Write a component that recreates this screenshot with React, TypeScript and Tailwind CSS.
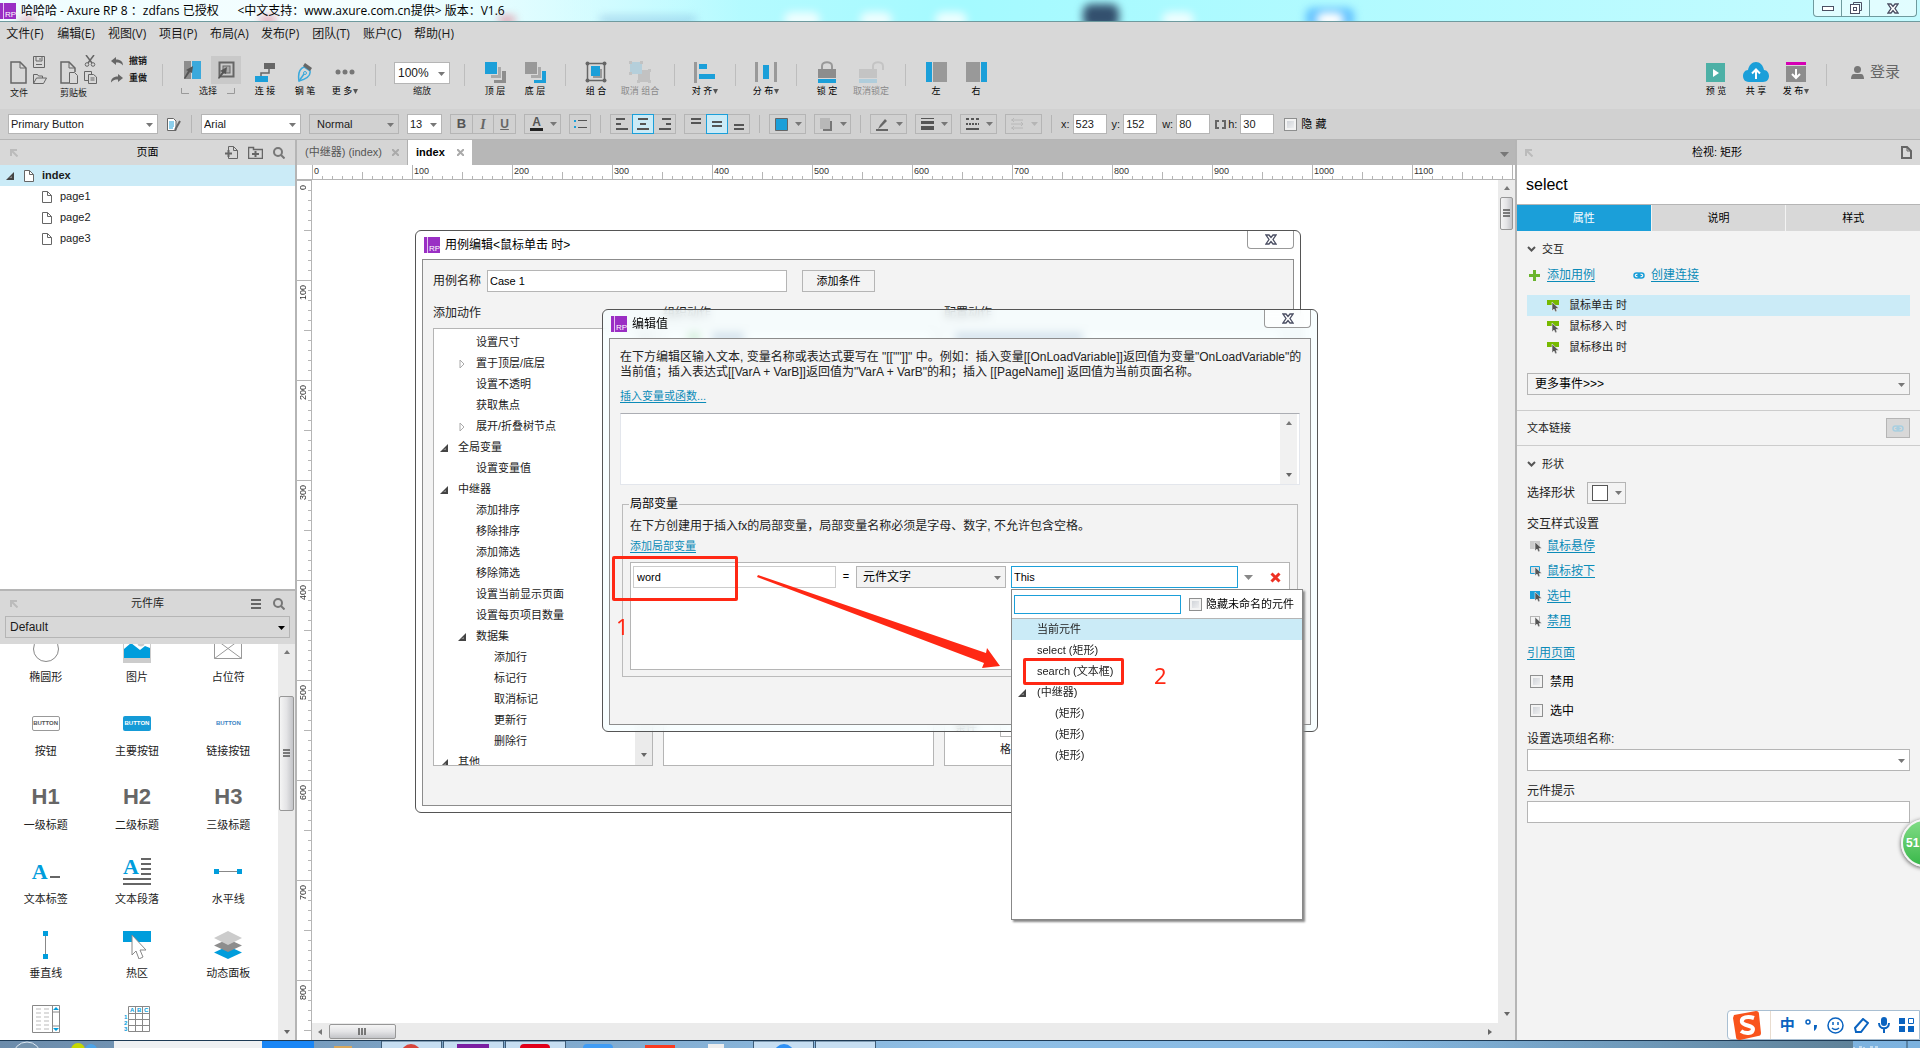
import type { ReactNode } from 'react'

const menus = ['文件(F)', '编辑(E)', '视图(V)', '项目(P)', '布局(A)', '发布(P)', '团队(T)', '账户(C)', '帮助(H)']

const actions = [
  { label: '设置尺寸', level: 2 },
  { label: '置于顶层/底层', level: 2, arrow: 'closed' },
  { label: '设置不透明', level: 2 },
  { label: '获取焦点', level: 2 },
  { label: '展开/折叠树节点', level: 2, arrow: 'closed' },
  { label: '全局变量', level: 1, arrow: 'open' },
  { label: '设置变量值', level: 2 },
  { label: '中继器', level: 1, arrow: 'open' },
  { label: '添加排序', level: 2 },
  { label: '移除排序', level: 2 },
  { label: '添加筛选', level: 2 },
  { label: '移除筛选', level: 2 },
  { label: '设置当前显示页面', level: 2 },
  { label: '设置每页项目数量', level: 2 },
  { label: '数据集', level: 2, arrow: 'open' },
  { label: '添加行', level: 3 },
  { label: '标记行', level: 3 },
  { label: '取消标记', level: 3 },
  { label: '更新行', level: 3 },
  { label: '删除行', level: 3 },
  { label: '其他', level: 1, arrow: 'open' },
]

const levelPadding: Record<number, string> = { 1: 'pl-1.5', 2: 'pl-6', 3: 'pl-[42px]' }

/* ---------- shared pieces ---------- */

function Svg({ w, h, children, className = '' }: { w: number; h: number; children: ReactNode; className?: string }) {
  return (
    <svg width={w} height={h} viewBox={`0 0 ${w} ${h}`} fill="none" className={`shrink-0 ${className}`} aria-hidden="true">
      {children}
    </svg>
  )
}

const Down = ({ color = '#777', className = '' }: { color?: string; className?: string }) => (
  <Svg w={7} h={4} className={className}><path d="M0 0h7L3.5 4z" fill={color} /></Svg>
)

const OpenArrow = () => <Svg w={8} h={8}><path d="M8 0v8H0z" fill="#444" /><path d="M6 4v2H3z" fill="#888" /></Svg>
const ClosedArrow = () => <Svg w={8} h={10}><path d="M2 1v8l4-4z" fill="#fff" stroke="#aaa" /></Svg>

function PageIcon() {
  return <Svg w={10} h={12}><path d="M.5.5h5l4 4v7h-9z" fill="#fff" stroke="#666" /><path d="M5.500.5v4h4" stroke="#666" /></Svg>
}

const PinIcon = () => (
  <Svg w={8} h={8}><path d="M1 7V1h6M1.500 1.500l6 6" stroke="#bbb" strokeWidth="2" /></Svg>
)

const SearchIcon = () => (
  <Svg w={12} h={12}><circle cx="5" cy="5" r="4" stroke="#777" strokeWidth="2" /><path d="M8 8l3.500 3.500" stroke="#777" strokeWidth="2" /></Svg>
)

function RpIcon() {
  return (
    <span className="relative flex h-4 w-4 shrink-0 items-end justify-end bg-[#9a2fc4] font-['Liberation_Sans'] text-[8px] leading-[9px] text-white">
      <span className="absolute inset-y-0 left-[3px] w-px bg-[#e4c3f0]" />
      RP
    </span>
  )
}

const CloseGlyph = () => (
  <Svg w={12} h={11}>
    <path d="M1 1h3l2 2.500L8 1h3L8 5.500l3 4.500H8L6 7.500 4 10H1l3-4.500z" fill="#fff" stroke="#4b4f63" strokeWidth="1.300" />
  </Svg>
)

function Select({ label, value, className = '', textClass = '', arrow = '#777' }: { label: string; value: string; className?: string; textClass?: string; arrow?: string }) {
  return (
    <span className={`relative flex border border-[#b5b5b5] ${className}`}>
      <select aria-label={label} className={`w-full min-w-0 appearance-none bg-transparent pr-3 outline-none ${textClass}`}>
        <option>{value}</option>
      </select>
      <Down color={arrow} className="pointer-events-none absolute top-1/2 right-1 -mt-px" />
    </span>
  )
}

function Check({ id }: { id: string }) {
  return (
    <input
      id={id}
      type="checkbox"
      className="h-[13px] w-[13px] shrink-0 appearance-none border border-[#8e8f8f] bg-linear-to-br from-[#c9cdd3] to-[#f6f6f6] shadow-[inset_0_0_0_2px_#f3f3f3]"
    />
  )
}

function Thumb({ horizontal = false, className = '' }: { horizontal?: boolean; className?: string }) {
  return (
    <div className={`flex items-center justify-center rounded-xs border border-[#979797] ${horizontal ? 'bg-linear-to-b' : 'bg-linear-to-r'} from-[#f5f5f5] via-[#e4e4e6] to-[#c3c4c8] ${className}`}>
      {horizontal
        ? <Svg w={9} h={7}><path d="M1 0v7M4 0v7M7 0v7" stroke="#555" strokeWidth="1.500" /></Svg>
        : <Svg w={7} h={9}><path d="M0 1h7M0 4h7M0 7h7" stroke="#555" strokeWidth="1.500" /></Svg>}
    </div>
  )
}

const UpTri = () => <Svg w={6} h={4}><path d="M0 4h6L3 0z" fill="#777" /></Svg>
const DownTri = () => <Svg w={6} h={4}><path d="M0 0h6L3 4z" fill="#666" /></Svg>

/* ---------- title + menu ---------- */

function TitleBar() {
  return (
    <header className="relative flex h-[22px] shrink-0 items-center overflow-hidden border-b border-[#6f9a9e] bg-linear-to-r from-[#e4fbff] via-[#a4faff] to-[#c4fbff] font-['Open_Sans','Noto_Sans_CJK_SC',sans-serif]">
      <div className="absolute inset-y-0 left-0 w-[740px] bg-linear-to-r from-[#effdff] via-[#f4feff] to-transparent" />
      <div className="absolute top-4 left-[600px] h-2 w-24 bg-[#7fb7dd]/50 blur-xs" />
      <div className="absolute top-4 left-[20px] h-2 w-4 bg-[#e08a9a]/60 blur-xs" />
      <div className="absolute top-4 left-[260px] h-2 w-4 bg-[#e08a9a]/80 blur-xs" />
      <div className="absolute top-4 left-[499px] h-2 w-4 bg-[#e08a9a]/80 blur-xs" />
      <div className="absolute top-1 left-[1083px] h-6 w-9 rounded-lg bg-[#33506e] blur-xs" />
      <div className="absolute top-3 left-[784px] h-4 w-9 rounded-full bg-white/80 blur-xs" />
      <div className="absolute top-3 left-[860px] h-4 w-8 rounded-full bg-white/80 blur-xs" />
      <div className="absolute top-3 left-[935px] h-4 w-8 rounded-full bg-white/80 blur-xs" />
      <div className="absolute top-3 left-[1162px] h-4 w-8 rounded-full bg-white/80 blur-xs" />
      <div className="absolute top-2 left-[1306px] h-5 w-12 rounded-md bg-[#5fc0ff] blur-xs" />
      <div className="absolute top-3 left-[1316px] h-4 w-7 rounded-full bg-white blur-xs" />
      <div className="relative flex items-center gap-[5px]">
        <RpIcon />
        <h1 className="text-[12px] leading-4 whitespace-pre text-black">哈哈哈 - Axure RP 8 ：zdfans 已授权      &lt;中文支持：www.axure.com.cn提供&gt; 版本：V1.6</h1>
      </div>
      <div className="absolute top-0 right-[3px] flex h-[17px] overflow-hidden rounded-b border border-t-0 border-[#6f9a9e] bg-white/50">
        <button aria-label="最小化" className="flex w-7 items-center justify-center border-r border-[#6f9a9e]"><Svg w={12} h={5}><rect x=".5" y=".5" width="11" height="4" fill="#fff" stroke="#4b4f63" /></Svg></button>
        <button aria-label="还原" className="flex w-7 items-center justify-center border-r border-[#6f9a9e]"><Svg w={12} h={12}><path d="M3.500 2.500v-2h8v8h-2" stroke="#4b4f63" /><rect x=".5" y="2.500" width="9" height="9" fill="#fff" stroke="#4b4f63" /><rect x="3.500" y="5.500" width="3" height="3" stroke="#4b4f63" /></Svg></button>
        <button aria-label="关闭" className="flex w-[46px] items-center justify-center"><CloseGlyph /></button>
      </div>
    </header>
  )
}

function MenuBar() {
  return (
    <nav className="flex h-6 shrink-0 items-center gap-[13px] pl-1.5 font-['Open_Sans','Noto_Sans_CJK_SC',sans-serif] text-[12px] text-[#1a1a1a]">
      {menus.map(m => <button key={m} className="w-[38px] whitespace-nowrap">{m}</button>)}
    </nav>
  )
}

/* ---------- main toolbar ---------- */

function Tool({ label, icon, wide = false, disabled = false, more = false }: { label: string; icon: ReactNode; wide?: boolean; disabled?: boolean; more?: boolean }) {
  return (
    <button disabled={disabled} className={`flex shrink-0 flex-col items-center ${wide ? 'w-12' : 'w-10'} ${disabled ? 'text-[#8a8a8a]' : 'text-black'}`}>
      <span className="flex h-7 items-center pt-1">{icon}</span>
      <span className="flex items-center gap-px text-[9px] leading-[14px] whitespace-nowrap">
        {label}
        {more && <Svg w={5} h={5}><path d="M0 0h5L2.500 5z" fill="#555" /></Svg>}
      </span>
    </button>
  )
}

const Sep = () => <span className="mx-2.5 mt-2 h-[22px] w-px shrink-0 bg-[#bdbdbd]" />

function Toolbar() {
  return (
    <div className="flex h-[63px] shrink-0 items-start pt-2.5">
      <div className="flex w-11 shrink-0 flex-col pl-2.5">
        <div className="flex h-7 items-end gap-[6px]">
          <Svg w={17} h={23}><path d="M1 1h9l6 6v15H1z" stroke="#666" strokeWidth="1.500" /><path d="M10 1v6h6" stroke="#666" /></Svg>
          <div className="flex flex-col gap-1.5">
            <Svg w={12} h={12}><path d="M.5.5h11v11H.5z" stroke="#666" /><path d="M3 1v4h6V1M3 8.500h6M7 2v2" stroke="#666" /></Svg>
            <Svg w={14} h={10}><path d="M.5 9.500v-9h4l1 1.500h4v2M.5 9.500l3-5.500h10l-3 5.500z" stroke="#666" /></Svg>
          </div>
        </div>
        <span className="text-[9px] leading-[18px]">文件</span>
      </div>
      <div className="flex w-14 shrink-0 flex-col pl-4">
        <div className="flex h-7 items-end gap-[6px]">
          <Svg w={18} h={23}><path d="M9 22H1V1h8l6 6v4" stroke="#666" strokeWidth="1.500" /><path d="M9 1v6h6" stroke="#666" /><path d="M9.500 11.500h5l3 3v8h-8z" fill="#d8d8d8" stroke="#666" /></Svg>
          <div className="flex flex-col gap-1">
            <Svg w={12} h={12}><path d="M2 0l6 8M10 0L4 8" stroke="#666" strokeWidth="1.500" /><circle cx="3" cy="9.500" r="1.800" stroke="#666" /><circle cx="9" cy="9.500" r="1.800" stroke="#666" /></Svg>
            <Svg w={13} h={13}><path d="M4 9.500H.5v-9h7V3" stroke="#666" /><path d="M4.500 3.500h5l3 2.500v6.500h-8zM6.500 7h4M6.500 9h4" stroke="#666" /></Svg>
          </div>
        </div>
        <span className="text-[9px] leading-[18px]">剪贴板</span>
      </div>
      <div className="-mt-0.5 flex w-[52px] shrink-0 flex-col gap-[3px] pl-[11px] text-[9px] leading-[14px] font-bold whitespace-nowrap">
        <button className="flex items-center gap-1.5"><Svg w={12} h={9}><path d="M5 0v2.500c5 0 7 2.500 7 6C10 6 8 5.500 5 5.500V8L0 4z" fill="#666" /></Svg>撤销</button>
        <button className="flex items-center gap-1.5"><Svg w={12} h={9}><path d="M7 0v2.500C2 2.500 0 5 0 8.500 2 6 4 5.500 7 5.500V8l5-4z" fill="#666" /></Svg>重做</button>
      </div>
      <Sep />
      <div className="flex w-[72px] shrink-0 flex-col pl-2">
        <div className="flex">
          <button aria-label="相交选中" className="flex h-7 w-[30px] items-center pl-[3px]">
            <Svg w={17} h={20}><path d="M0 1h7v18H0z" fill="#8d8d8d" /><path d="M8 1h9v18H8z" fill="#3ba9dc" /><path d="M9 6L8 13 6 12l-5 7-1-1 4-7-2-1z" fill="#555" /></Svg>
          </button>
          <button aria-label="包含选中" className="flex h-7 w-[30px] items-center justify-center bg-[#c9c9c9]">
            <Svg w={18} h={20}><rect x="2.500" y="2.500" width="14" height="14" stroke="#666" strokeWidth="2" /><rect x="6" y="6" width="7" height="7" fill="#aaa" stroke="#666" /><path d="M10 7L9 14 7 13l-5 6-1-1 4-6-2-1z" fill="#555" /></Svg>
          </button>
        </div>
        <div className="flex items-center gap-2.5 text-[9px] leading-[14px]">
          <Svg w={8} h={6}><path d="M.5 0v5.500H8" stroke="#999" /></Svg>选择<Svg w={8} h={6}><path d="M7.500 0v5.500H0" stroke="#999" /></Svg>
        </div>
      </div>
      <Tool label="连 接" icon={<Svg w={20} h={20}><path d="M9 1h11v6H9z" fill="#666" /><path d="M0 14h13v6H0z" fill="#1b9fd9" /><path d="M14 7v4H6v3" stroke="#666" strokeWidth="1.500" /></Svg>} />
      <Tool label="钢 笔" icon={<Svg w={16} h={20}><path d="M7 5l6 4c1 5-4 8-11 10C1 13 2 7 7 5z" stroke="#3ba9dc" strokeWidth="1.500" /><path d="M2 19l5-7" stroke="#3ba9dc" strokeWidth="1.500" /><circle cx="8" cy="11" r="1.500" stroke="#3ba9dc" /><path d="M8 1l7 5-2 3-7-5z" fill="#666" /></Svg>} />
      <Tool label="更 多" more icon={<Svg w={20} h={6}><circle cx="3" cy="3" r="2.500" fill="#777" /><circle cx="10" cy="3" r="2.500" fill="#777" /><circle cx="17" cy="3" r="2.500" fill="#777" /></Svg>} />
      <Sep />
      <div className="flex w-[68px] shrink-0 flex-col items-center pt-1.5 pl-1">
        <Select label="缩放" value="100%" className="h-[22px] w-14 bg-white" textClass="pl-[3px] text-[12px]" />
        <span className="text-[9px] leading-[14px]">缩放</span>
      </div>
      <Sep />
      <Tool label="顶 层" icon={<Svg w={21} h={21}><path d="M17 9h4v12h-12v-3h8z" fill="#8d8d8d" /><path d="M13 5h3v11H6v-3h7z" fill="#aaa" /><path d="M0 0h12v12H0z" fill="#1b9fd9" /></Svg>} />
      <Tool label="底 层" icon={<Svg w={21} h={21}><path d="M17 9h4v12H9v-3h8z" fill="#1b9fd9" /><path d="M13 5h3v11H6v-3h7z" fill="#aaa" /><path d="M0 0h12v12H0z" fill="#999" /></Svg>} />
      <Sep />
      <Tool label="组 合" icon={<Svg w={22} h={22}><rect x="2.500" y="2.500" width="17" height="17" stroke="#666" strokeWidth="1.500" /><path d="M8 8h9v9H8z" fill="#999" /><path d="M6 5h9v10H6z" fill="#1b9fd9" /><g fill="#666"><circle cx="2.500" cy="2.500" r="2" /><circle cx="19.500" cy="2.500" r="2" /><circle cx="2.500" cy="19.500" r="2" /><circle cx="19.500" cy="19.500" r="2" /></g></Svg>} />
      <Tool label="取消 组合" wide disabled icon={<Svg w={22} h={22}><path d="M9 9h12v12H9z" fill="#c2c2c2" /><path d="M1 1h12v12H1z" fill="#b5cfdb" /><g fill="#c2c2c2"><path d="M0 0h3v3H0zM11 0h3v3h-3zM0 11h3v3H0zM19 8h3v3h-3zM8 19h3v3H8zM19 19h3v3h-3z" /></g></Svg>} />
      <Sep />
      <Tool label="对 齐" more icon={<Svg w={22} h={21}><path d="M0 0h3v21H0z" fill="#999" /><path d="M5 2h8v5H5zM5 12h16v5H5z" fill="#1b9fd9" /></Svg>} />
      <Sep />
      <Tool label="分 布" more icon={<Svg w={22} h={20}><path d="M0 0h3v20H0zM19 0h3v20h-3z" fill="#999" /><path d="M8 3h6v14H8z" fill="#1b9fd9" /></Svg>} />
      <Sep />
      <Tool label="锁 定" icon={<Svg w={18} h={22}><path d="M4 9V5c0-5 10-5 10 0v4" stroke="#999" strokeWidth="2" /><path d="M0 8h18v9H0z" fill="#8d8d8d" /><path d="M0 18h18v4H0z" fill="#1b9fd9" /></Svg>} />
      <Tool label="取消锁定" wide disabled icon={<Svg w={25} h={22}><path d="M14 9V5c0-5 10-5 10 0v4" stroke="#c4c4c4" strokeWidth="2" /><path d="M0 8h18v9H0z" fill="#c4c4c4" /><path d="M0 18h18v4H0z" fill="#b0cddb" /></Svg>} />
      <Sep />
      <Tool label="左" icon={<Svg w={21} h={20}><path d="M0 0h6v20H0z" fill="#1b9fd9" /><path d="M7 0h14v20H7z" fill="#999" /></Svg>} />
      <Tool label="右" icon={<Svg w={21} h={20}><path d="M0 0h14v20H0z" fill="#999" /><path d="M15 0h6v20h-6z" fill="#1b9fd9" /></Svg>} />
      <div className="ml-auto flex shrink-0 items-start pr-5">
        <Tool label="预 览" icon={<Svg w={19} h={19}><path d="M0 0h19v19H0z" fill="#4db0a6" /><path d="M7 6l6 4-6 4z" fill="#fff" /></Svg>} />
        <Tool label="共 享" icon={<Svg w={26} h={20}><path d="M6 20C1 20 0 16 0 14c0-3 2-6 5-6 1-5 4-8 8-8s7 3 8 8c3 0 5 3 5 6s-2 6-6 6z" fill="#1b9fd9" /><path d="M13 17V8M9 11.500L13 7.500l4 4" stroke="#fff" strokeWidth="2" /></Svg>} />
        <Tool label="发 布" more icon={<Svg w={20} h={20}><path d="M0 0h20v3H0z" fill="#d500b4" /><path d="M0 4h20v16H0z" fill="#8d8d8d" /><path d="M10 7v9M6 12l4 4 4-4" stroke="#fff" strokeWidth="2" /></Svg>} />
        <Sep />
        <button className="flex items-center gap-1.5 pt-1 pl-3.5 text-[15px] leading-6 text-[#666]">
          <Svg w={13} h={13}><circle cx="6.500" cy="3.500" r="3.500" fill="#777" /><path d="M0 13c0-3 1-5 3-5h7c2 0 3 2 3 5z" fill="#777" /></Svg>
          登录
        </button>
      </div>
    </div>
  )
}

/* ---------- format bar ---------- */

const Split = () => <span className="mx-px h-[18px] w-px shrink-0 bg-[#b5b5b5]" />

function DropBtn({ label, children, disabled = false }: { label: string; children: ReactNode; disabled?: boolean }) {
  return (
    <button aria-label={label} disabled={disabled} className="flex h-5 w-[37px] shrink-0 items-center justify-between border border-[#b5b5b5] px-[3px] pl-[5px]">
      {children}
      <Down color={disabled ? '#b5b5b5' : '#777'} />
    </button>
  )
}

function Segment({ items }: { items: { label: string; icon: ReactNode; active?: boolean }[] }) {
  return (
    <div className="flex shrink-0">
      {items.map((it, i) => (
        <button key={it.label} aria-label={it.label} className={`flex h-5 w-[22px] items-center justify-center border ${it.active ? 'border-[#1b9fd9] bg-[#cbebf7]' : i === 0 ? 'border-r-0 border-[#b5b5b5]' : i === 1 ? 'border-[#b5b5b5]' : 'border-l-0 border-[#b5b5b5]'}`}>
          {it.icon}
        </button>
      ))}
    </div>
  )
}

const Lines = ({ d }: { d: string }) => <Svg w={12} h={12}><path d={d} stroke="#555" strokeWidth="2" /></Svg>

function Coord({ name, value }: { name: string; value: string }) {
  return (
    <label className="flex items-center gap-[3px]">
      {name}:
      <input defaultValue={value} className="h-5 w-[34px] border border-[#b5b5b5] bg-white pl-[2px] outline-none" />
    </label>
  )
}

function FormatBar() {
  return (
    <div className="flex h-[31px] shrink-0 items-center gap-2 border-b border-[#b5b5b5] bg-[#d1d1d1] pl-2 text-[11px]">
      <Select label="样式" value="Primary Button" className="h-5 w-[150px] shrink-0 bg-white" textClass="pl-[2px]" />
      <button aria-label="管理样式" className="w-4 pl-px">
        <Svg w={14} h={13}><path d="M.5.5h6l2.500 2.500v9.500H.5z" fill="#fff" stroke="#666" /><path d="M2 4h5M2 6h5M2 8h5M2 10h4" stroke="#1b9fd9" /><path d="M13 3L8 12" stroke="#666" strokeWidth="2" /></Svg>
      </button>
      <Split />
      <Select label="字体" value="Arial" className="h-5 w-[100px] shrink-0 bg-white" textClass="pl-[2px]" />
      <Select label="字形" value="Normal" className="h-5 w-[90px] shrink-0" textClass="pl-[7px]" />
      <Select label="字号" value="13" className="h-5 w-[35px] shrink-0 bg-white" textClass="pl-[2px]" />
      <Segment items={[
        { label: '粗体', icon: <b className="text-[13px] text-[#555]">B</b> },
        { label: '斜体', icon: <i className="font-['Liberation_Serif'] text-[14px] font-bold text-[#666]">I</i> },
        { label: '下划线', icon: <u className="text-[12px] font-bold text-[#666]">U</u> },
      ]} />
      <DropBtn label="文字颜色"><span className="flex w-[13px] flex-col items-center text-[12px] leading-[11px] font-bold text-[#555]">A<span className="h-[3px] w-[13px] bg-[#222]" /></span></DropBtn>
      <button aria-label="项目符号" className="flex h-5 w-[22px] shrink-0 items-center justify-center border border-[#b5b5b5]">
        <Svg w={13} h={10}><path d="M4 1.500h9M4 8.500h9" stroke="#555" /><path d="M0 1h2v2H0zM0 7h2v2H0z" fill="#1b9fd9" /></Svg>
      </button>
      <Split />
      <Segment items={[
        { label: '左对齐', icon: <Lines d="M0 1h9M0 6h5M0 11h12" /> },
        { label: '居中', icon: <Lines d="M1 1h10M3 6h6M0 11h12" />, active: true },
        { label: '右对齐', icon: <Lines d="M3 1h9M7 6h5M0 11h12" /> },
      ]} />
      <Segment items={[
        { label: '顶部对齐', icon: <Lines d="M1 1h10M1 5h10" /> },
        { label: '垂直居中', icon: <Lines d="M1 4h10M1 8h10" />, active: true },
        { label: '底部对齐', icon: <Lines d="M1 7h10M1 11h10" /> },
      ]} />
      <Split />
      <DropBtn label="填充颜色"><Svg w={13} h={13}><path d="M.5.5h12v12H.5z" fill="#1b9fd9" stroke="#666" /></Svg></DropBtn>
      <DropBtn label="外部阴影"><Svg w={13} h={13}><path d="M3 3h9v10H3z" fill="#777" /><path d="M0 0h10v11H0z" fill="#b8b8b8" /></Svg></DropBtn>
      <Split />
      <DropBtn label="线段颜色"><Svg w={13} h={13}><path d="M2 11l2-4 5-6 2 2-6 6z" fill="#666" /><path d="M0 12h12" stroke="#666" strokeWidth="2" /></Svg></DropBtn>
      <DropBtn label="线宽"><Svg w={13} h={12}><path d="M0 .5h13" stroke="#555" /><path d="M0 4.500h13" stroke="#555" strokeWidth="3" /><path d="M0 10h13" stroke="#555" strokeWidth="4" /></Svg></DropBtn>
      <DropBtn label="线段类型"><Svg w={13} h={12}><path d="M0 1h13" stroke="#555" strokeWidth="2" strokeDasharray="3 2" /><path d="M0 6h13" stroke="#555" strokeWidth="2" strokeDasharray="2 1" /><path d="M0 11h13" stroke="#555" strokeWidth="2" /></Svg></DropBtn>
      <DropBtn label="箭头" disabled><Svg w={13} h={12}><path d="M0 2h12M0 6h12M0 10h12M3 0L1 2l2 2M10 4l2 2-2 2M3 8l-2 2 2 2" stroke="#b8b8b8" /></Svg></DropBtn>
      <Split />
      <div className="flex items-center gap-[5px]">
        <Coord name="x" value="523" />
        <Coord name="y" value="152" />
        <Coord name="w" value="80" />
        <div className="flex items-center gap-0.5">
          <Svg w={11} h={9}><path d="M4 1H1v7h3M7 1h3v7H7" stroke="#666" strokeWidth="2" /></Svg>
          <Coord name="h" value="30" />
        </div>
      </div>
      <div className="flex items-center gap-1 pl-0.5">
        <Check id="hidden" />
        <label htmlFor="hidden" className="text-black">隐 藏</label>
      </div>
    </div>
  )
}

/* ---------- left column ---------- */

const Blue = '#009ddc'

function Glyph({ text }: { text: string }) {
  return <span className="text-[22px] leading-7 font-bold text-[#666]">{text}</span>
}

const widgets: { label?: string; icon: ReactNode }[] = [
  { label: '椭圆形', icon: <Svg w={28} h={28}><circle cx="14" cy="14" r="12.500" stroke="#888" /></Svg> },
  { label: '图片', icon: <Svg w={28} h={28}><path d="M0 0h28v28H0z" fill="#ccc" /><path d="M1 1h26v17H1z" fill="#fff" /><circle cx="18" cy="8" r="3.500" fill="#ccc" /><path d="M1 14l7-6 9 7 5-4 5 2v10H1z" fill={Blue} /></Svg> },
  { label: '占位符', icon: <Svg w={28} h={28}><path d="M.5 3.500h27v20H.5zM.5 3.500l27 20M27.500 3.500l-27 20" stroke="#999" /></Svg> },
  { label: '按钮', icon: <span className="flex h-[15px] w-7 items-center justify-center rounded-xs border border-[#999] text-[6px] font-bold text-[#555]">BUTTON</span> },
  { label: '主要按钮', icon: <span className="flex h-[15px] w-7 items-center justify-center rounded-xs bg-[#159bd7] text-[6px] font-bold text-white">BUTTON</span> },
  { label: '链接按钮', icon: <span className="text-[6px] font-bold text-[#3b84c4]">BUTTON</span> },
  { label: '一级标题', icon: <Glyph text="H1" /> },
  { label: '二级标题', icon: <Glyph text="H2" /> },
  { label: '三级标题', icon: <Glyph text="H3" /> },
  { label: '文本标签', icon: <span className="flex items-end pt-0.5 font-['Liberation_Serif'] text-[22px] leading-[22px] font-bold text-[#009ddc]">A<Svg w={12} h={8}><path d="M2 2h10" stroke="#666" strokeWidth="2" /></Svg></span> },
  { label: '文本段落', icon: <span className="relative flex h-7 w-7 font-['Liberation_Serif'] text-[22px] leading-5 font-bold text-[#009ddc]">A<Svg w={28} h={28} className="absolute inset-0"><path d="M18 2h10M18 7h10M18 12h10M18 17h10M0 22h28M0 27h28" stroke="#666" strokeWidth="2" /></Svg></span> },
  { label: '水平线', icon: <Svg w={28} h={28}><path d="M3 14.500h22" stroke="#888" /><path d="M0 12h5v5H0zM23 12h5v5h-5z" fill={Blue} /></Svg> },
  { label: '垂直线', icon: <Svg w={28} h={28}><path d="M13.500 3v22" stroke="#888" /><path d="M11 0h5v5h-5zM11 23h5v5h-5z" fill={Blue} /></Svg> },
  { label: '热区', icon: <Svg w={28} h={28}><path d="M0 0h28v11H0z" fill={Blue} /><path d="M9 4v20l4-4 3 8 4-2-3-7h6z" fill="#fff" stroke="#888" /></Svg> },
  { label: '动态面板', icon: <Svg w={28} h={28}><path d="M14 15l14 6.500L14 28 0 21.500z" fill={Blue} /><path d="M14 8l14 6.500L14 21 0 14.500z" fill="#8d8d8d" /><path d="M14 0l14 7-14 7L0 7z" fill="#ccc" /></Svg> },
  { icon: <Svg w={28} h={28}><path d="M.5.5h27v27H.5zM20.500.5v27M20.500 7h7M20.500 21h7" stroke="#888" /><path d="M4 4h5M12 4h5M4 8h5M12 8h5M4 12h5M12 12h5M4 16h5M12 16h5M4 20h5M12 20h5M4 24h5M12 24h5" stroke="#bbb" /><path d="M24 2l3 3h-6zM24 26l3-3h-6z" fill={Blue} /></Svg> },
  {
    icon: (
      <Svg w={28} h={28}>
        <path d="M5.500 1.500h21v25h-21zM5.500 8.500h21M5.500 14.500h21M5.500 20.500h21M12.500 1.500v25M19.500 1.500v25" stroke="#888" />
        <g fill={Blue} fontSize="6" fontWeight="bold"><text x="7" y="7">A</text><text x="14" y="7">B</text><text x="21" y="7">C</text><text x="1" y="14">1</text><text x="1" y="20">2</text><text x="1" y="26">3</text></g>
      </Svg>
    ),
  },
]

function LeftColumn() {
  return (
    <aside className="flex w-[297px] shrink-0 flex-col border-r-2 border-[#b5b5b5]">
      <section className="flex min-h-0 flex-1 flex-col bg-white">
        <div className="flex h-[25px] shrink-0 items-center bg-[#d8d8d8] px-2.5">
          <div className="w-16"><PinIcon /></div>
          <h2 className="flex-1 text-center text-[11px] text-black">页面</h2>
          <div className="flex w-16 items-center justify-end gap-2.5">
            <button aria-label="添加页面"><Svg w={13} h={13}><path d="M3.500 4V.5h5l4 4v8h-9V11" stroke="#666" /><path d="M8.500.5v4h4" stroke="#666" /><path d="M0 7.500h7M3.500 4v7" stroke="#666" strokeWidth="2" /></Svg></button>
            <button aria-label="添加文件夹"><Svg w={15} h={13}><path d="M.5 1.500h5v2h9v9H.5z" stroke="#666" strokeWidth="1.500" /><path d="M4 8h7M7.500 5v6" stroke="#666" strokeWidth="2" /></Svg></button>
            <button aria-label="搜索页面"><SearchIcon /></button>
          </div>
        </div>
        <ul className="text-[11px] text-[#1a1a1a]">
          <li className="flex h-[21px] items-center bg-[#cbebf7] pl-1.5 font-bold">
            <OpenArrow /><span className="w-2.5" /><PageIcon /><span className="pl-2">index</span>
          </li>
          {['page1', 'page2', 'page3'].map(p => (
            <li key={p} className="flex h-[21px] items-center gap-2 pl-[42px]"><PageIcon />{p}</li>
          ))}
        </ul>
      </section>
      <section className="flex h-[451px] shrink-0 flex-col border-t-2 border-[#b5b5b5] bg-white">
        <div className="shrink-0 bg-[#d8d8d8] pb-1.5">
          <div className="flex h-[25px] items-center px-2.5">
            <div className="w-16"><PinIcon /></div>
            <h2 className="flex-1 text-center text-[11px] text-[#222]">元件库</h2>
            <div className="flex w-16 items-center justify-end gap-3">
              <button aria-label="选项"><Svg w={10} h={10}><path d="M0 1h10M0 5h10M0 9h10" stroke="#666" strokeWidth="2" /></Svg></button>
              <button aria-label="搜索元件"><SearchIcon /></button>
            </div>
          </div>
          <Select label="元件库" value="Default" className="mx-[5px] h-[22px]" textClass="pl-1 text-[12px]" arrow="#000" />
        </div>
        <div className="flex min-h-0 flex-1">
          <div className="min-w-0 flex-1 overflow-hidden pr-1">
            <div className="-mt-[9px] grid grid-cols-3">
              {widgets.map((w, i) => (
                <div key={i} className="flex h-[74px] flex-col items-center text-[#222]">
                  <span className="flex h-7 items-center">{w.icon}</span>
                  {w.label && <span className="pt-1.5 text-[11px] leading-4">{w.label}</span>}
                </div>
              ))}
            </div>
          </div>
          <div className="flex w-[17px] flex-col items-center bg-[#ebebeb] py-1.5">
            <UpTri />
            <Thumb className="mt-[42px] h-[115px] w-[15px]" />
            <span className="mt-auto"><DownTri /></span>
          </div>
        </div>
      </section>
    </aside>
  )
}

/* ---------- canvas ---------- */

const rulerX = 'M10.500 11v4M20.500 11v4M30.500 11v4M40.500 11v4M50.500 7v8M60.500 11v4M70.500 11v4M80.500 11v4M90.500 11v4'
const rulerY = 'M11 10.500h4M11 20.500h4M11 30.500h4M11 40.500h4M7 50.500h8M11 60.500h4M11 70.500h4M11 80.500h4M11 90.500h4'

function Canvas() {
  return (
    <main className="flex min-w-0 flex-1 flex-col bg-white">
      <div className="flex h-[25px] shrink-0 bg-[#b7b7b7] text-[11px]">
        <button className="flex items-center gap-2.5 border-r border-[#b0b0b0] bg-[#d5d5d5] px-2 text-[#555]">
          (中继器) (index)
          <Svg w={7} h={7}><path d="M0 0l7 7M7 0L0 7" stroke="#aaa" strokeWidth="2" /></Svg>
        </button>
        <button className="flex items-center gap-3 bg-white px-2 font-bold text-black">
          index
          <Svg w={7} h={7}><path d="M0 0l7 7M7 0L0 7" stroke="#aaa" strokeWidth="2" /></Svg>
        </button>
        <span className="ml-auto flex items-center pt-1 pr-1.5"><Svg w={9} h={5}><path d="M0 0h9L4.500 5z" fill="#777" /></Svg></span>
      </div>
      <div className="flex h-[15px] shrink-0 overflow-hidden border-b border-[#b5b5b5]">
        <span className="w-[15px] shrink-0" />
        {Array.from({ length: 13 }, (_, i) => (
          <div key={i} className="relative w-[100px] shrink-0 border-l border-[#b5b5b5] pl-px text-[9px] leading-[12px] text-[#333]">
            {i < 12 && i * 100}
            <Svg w={100} h={15} className="absolute top-0 -left-px"><path d={rulerX} stroke="#b5b5b5" /></Svg>
          </div>
        ))}
      </div>
      <div className="flex min-h-0 flex-1">
        <div className="flex w-[15px] shrink-0 flex-col overflow-hidden border-r border-[#b5b5b5]">
          {Array.from({ length: 9 }, (_, i) => (
            <div key={i} className="relative flex h-[100px] shrink-0 border-t border-[#b5b5b5] pt-1">
              <span className="h-fit rotate-180 text-[9px] leading-3 text-[#333] [writing-mode:vertical-rl]">{i * 100}</span>
              <Svg w={15} h={100} className="absolute -top-px left-0"><path d={rulerY} stroke="#b5b5b5" /></Svg>
            </div>
          ))}
        </div>
        <div className="flex min-w-0 flex-1 flex-col">
          <div className="flex-1" />
          <div className="flex h-[17px] shrink-0 items-center bg-[#ebebeb] pr-1.5 pl-1.5">
            <Svg w={4} h={6}><path d="M4 0v6L0 3z" fill="#777" /></Svg>
            <Thumb horizontal className="ml-[7px] h-[15px] w-[67px]" />
            <Svg w={4} h={6} className="ml-auto"><path d="M0 0v6l4-3z" fill="#666" /></Svg>
          </div>
        </div>
        <div className="flex w-[17px] shrink-0 flex-col items-center bg-[#ebebeb] pt-1.5 pb-6">
          <UpTri />
          <Thumb className="mt-[7px] h-[33px] w-[13px]" />
          <span className="mt-auto"><DownTri /></span>
        </div>
      </div>
    </main>
  )
}

/* ---------- inspector ---------- */

const A = ({ children, className = '' }: { children: ReactNode; className?: string }) => (
  <a href="#" className={`text-[#0b8bb8] underline underline-offset-2 ${className}`}>{children}</a>
)

const Cursor = ({ children }: { children?: ReactNode }) => (
  <Svg w={12} h={12}>{children}<path d="M5 2v9l2-2 1.500 3L10 11 9 8.500h3z" fill="#555" stroke="#f3f3f3" strokeWidth=".6" /></Svg>
)

const Chain = ({ color }: { color: string }) => (
  <Svg w={12} h={7}>
    <rect x="1" y="1" width="6" height="5" rx="2.500" stroke={color} strokeWidth="1.500" />
    <rect x="5" y="1" width="6" height="5" rx="2.500" stroke={color} strokeWidth="1.500" />
    <path d="M3 3.500h6" stroke={color} />
  </Svg>
)

const Chevron = () => <Svg w={9} h={6}><path d="M1 1l3.500 3.500L8 1" stroke="#555" strokeWidth="2" /></Svg>

const states: { label: string; icon: ReactNode }[] = [
  { label: '鼠标悬停', icon: <path d="M0 1h10v8H0z" fill="#ccc" /> },
  { label: '鼠标按下', icon: <path d="M.5 1.500h9v7h-9z" fill="#ddd" stroke="#1b9fd9" /> },
  { label: '选中', icon: <path d="M0 1h10v8H0z" fill="#1b9fd9" /> },
  { label: '禁用', icon: <path d="M.5 1.500h9v7h-9z" stroke="#777" strokeDasharray="1 1" /> },
]

function Inspector() {
  return (
    <aside className="flex w-[405px] shrink-0 flex-col border-l-2 border-[#b5b5b5] bg-[#f3f3f3] text-[#222]">
      <div className="flex h-[25px] shrink-0 items-center justify-between bg-[#d8d8d8] px-2 text-black">
        <PinIcon />
        <h2 className="text-[11px]">检视: 矩形</h2>
        <Svg w={11} h={13}><path d="M1 1h5l4 4v7H1z" stroke="#666" strokeWidth="2" /><path d="M6 1v4h4" stroke="#666" /></Svg>
      </div>
      <input aria-label="形状名称" defaultValue="select" className="h-10 shrink-0 border-b border-[#b5b5b5] bg-white pl-[9px] text-[16px] text-black outline-none" />
      <div className="flex h-[26px] shrink-0 gap-px bg-[#f3f3f3] text-[11px] text-black">
        <button className="flex-1 bg-[#1b9fd9] text-white">属性</button>
        <button className="flex-1 bg-[#d8d8d8]">说明</button>
        <button className="flex-1 bg-[#d8d8d8]">样式</button>
      </div>
      <section className="px-2.5 pt-2.5">
        <h3 className="flex h-4 items-center gap-1.5 text-[11px]"><Chevron />交互</h3>
        <div className="flex h-9 items-center text-[12px]">
          <span className="flex w-[106px] items-center gap-[7px] pl-0.5"><Svg w={11} h={11}><path d="M0 5.500h11M5.500 0v11" stroke="#6ab42d" strokeWidth="3" /></Svg><A>添加用例</A></span>
          <span className="flex items-center gap-1.5"><Chain color="#1b9fd9" /><A>创建连接</A></span>
        </div>
        <ul className="pt-[2px] text-[11px]">
          {['鼠标单击 时', '鼠标移入 时', '鼠标移出 时'].map((e, i) => (
            <li key={e} className={`flex h-[21px] items-center gap-2.5 pl-5 ${i === 0 ? 'bg-[#cbebf7]' : ''}`}>
              <Cursor><path d="M0 0h12v5H0z" fill="#76b900" /></Cursor>{e}
            </li>
          ))}
        </ul>
        <Select label="更多事件" value="更多事件>>>" className="mt-[15px] h-[22px]" textClass="pl-[7px] text-[12px] text-black" />
      </section>
      <section className="mt-[15px] flex h-9 shrink-0 items-center justify-between border-y border-[#ccc] px-2.5 text-[11px]">
        文本链接
        <button aria-label="插入文本链接" disabled className="flex h-5 w-6 items-center justify-center border border-[#b5b5b5] bg-[#d8d8d8]"><Chain color="#a9cfe0" /></button>
      </section>
      <section className="flex flex-col px-2.5 pt-2.5 text-[12px]">
        <h3 className="flex h-4 items-center gap-1.5 text-[11px]"><Chevron />形状</h3>
        <div className="mt-2.5 flex h-[22px] items-center gap-3">
          选择形状
          <button aria-label="选择形状" className="flex h-[22px] w-[39px] items-center justify-between border border-[#b5b5b5] px-[3px] pl-1">
            <span className="h-4 w-4 border border-[#555] bg-white" /><Down />
          </button>
        </div>
        <p className="mt-3 leading-4">交互样式设置</p>
        <ul className="mt-px">
          {states.map(s => (
            <li key={s.label} className="flex h-[25px] items-center gap-[5px] pl-[3px]"><Cursor>{s.icon}</Cursor><A>{s.label}</A></li>
          ))}
        </ul>
        <A className="mt-3 leading-4">引用页面</A>
        <div className="mt-1.5 flex h-[29px] items-center gap-[7px] pl-[3px] text-black"><Check id="disabled" /><label htmlFor="disabled">禁用</label></div>
        <div className="flex h-[29px] items-center gap-[7px] pl-[3px] text-black"><Check id="selected" /><label htmlFor="selected">选中</label></div>
        <span className="mt-1 leading-5">设置选项组名称:</span>
        <Select label="设置选项组名称" value="" className="h-[22px] bg-white" />
        <label htmlFor="tip" className="mt-2.5 leading-5">元件提示</label>
        <input id="tip" className="h-[22px] border border-[#b5b5b5] bg-white outline-none" />
      </section>
    </aside>
  )
}

/* ---------- dialogs ---------- */

function Dialog({ title, className, children }: { title: string; className: string; children: ReactNode }) {
  return (
    <div role="dialog" aria-label={title} className={`absolute flex flex-col rounded-md border border-[#555] px-1.5 pb-1.5 ${className}`}>
      <div className="relative flex h-7 shrink-0 items-center gap-[5px] pl-0.5 text-[12px] text-black">
        <RpIcon />
        {title}
        <button aria-label="关闭" className="absolute top-0 right-0 flex h-[18px] w-[47px] items-center justify-center rounded-b border border-t-0 border-[#999] bg-white/70"><CloseGlyph /></button>
      </div>
      <div className="relative flex min-h-0 flex-1 flex-col border border-[#8c8c8c] bg-[#f3f3f3]">{children}</div>
    </div>
  )
}

function CaseEditor() {
  return (
    <Dialog title="用例编辑<鼠标单击 时>" className="top-[230px] left-[415px] h-[583px] w-[886px] bg-white">
      <div className="flex flex-1 flex-col px-2.5 pt-2.5 text-[12px] text-[#222]">
        <div className="flex items-center">
          <label htmlFor="case" className="w-[54px]">用例名称</label>
          <input id="case" defaultValue="Case 1" className="h-[22px] w-[300px] border border-[#b5b5b5] bg-white pl-[2px] text-[11px] text-black outline-none" />
          <button className="ml-[15px] h-[22px] w-[73px] border border-[#b5b5b5] text-[11px] text-black">添加条件</button>
        </div>
        <div className="mt-2.5 flex h-[26px] leading-[22px]">
          <span className="w-[230px]">添加动作</span><span className="w-[281px]">组织动作</span><span>配置动作</span>
        </div>
        <div className="flex h-[438px] gap-2.5">
          <div className="flex w-[220px] overflow-hidden border border-[#b5b5b5] bg-white text-[11px]">
            <ul className="flex-1 pt-[3px]">
              {actions.map(a => (
                <li key={a.label} className={`flex h-[21px] items-center gap-2.5 ${levelPadding[a.level]}`}>
                  <span className="w-2">{a.arrow === 'open' ? <OpenArrow /> : a.arrow ? <ClosedArrow /> : null}</span>
                  {a.label}
                </li>
              ))}
            </ul>
            <div className="flex w-[17px] flex-col items-center justify-between bg-[#ebebeb] py-2"><UpTri /><DownTri /></div>
          </div>
          <div className="flex w-[271px] items-start gap-3 border border-[#b5b5b5] bg-white pt-1 pl-6">
            <span className="h-2 w-3 bg-[#5cb85c]" /><span className="h-2 w-8 bg-[#5b7fa6]" />
          </div>
          <div className="flex flex-1 flex-col border border-[#b5b5b5] bg-white pb-1.5 pl-2.5 text-[11px]">
            <span className="mt-1 h-2 w-32 bg-[#5b7fa6]" />
            <div className="mt-auto flex h-6 items-center"><span className="w-[45px]">条件</span><span className="h-5 flex-1 border border-[#b5b5b5]" /></div>
            <span className="pl-[45px] leading-5">格式</span>
          </div>
        </div>
      </div>
    </Dialog>
  )
}

const targets = [
  { label: '当前元件', pad: 'pl-[25px]', active: true },
  { label: 'select (矩形)', pad: 'pl-[25px]' },
  { label: 'search (文本框)', pad: 'pl-[25px]' },
  { label: '(中继器)', pad: 'pl-[25px]', open: true },
  { label: '(矩形)', pad: 'pl-[43px]' },
  { label: '(矩形)', pad: 'pl-[43px]' },
  { label: '(矩形)', pad: 'pl-[43px]' },
]

function TargetMenu() {
  return (
    <div className="absolute top-[23px] left-0 h-[331px] w-[292px] border border-[#888] bg-white text-[11px] text-[#222] shadow-[2px_2px_2px_#888]">
      <div className="flex h-[29px] items-center border-b border-[#b5b5b5] pl-0.5 text-black">
        <input aria-label="搜索" className="h-[19px] w-[167px] border border-[#1b9fd9] bg-white outline-none" />
        <span className="w-2" />
        <Check id="unnamed" />
        <label htmlFor="unnamed" className="pl-1">隐藏未命名的元件</label>
      </div>
      <ul>
        {targets.map((t, i) => (
          <li key={i} className={`relative flex h-[21px] items-center ${t.pad} ${t.active ? 'bg-[#cbebf7]' : ''}`}>
            {t.open && <span className="absolute left-1.5"><OpenArrow /></span>}
            {t.label}
          </li>
        ))}
      </ul>
    </div>
  )
}

function ValueEditor() {
  return (
    <Dialog title="编辑值" className="top-[309px] left-[602px] h-[423px] w-[716px] bg-[#f5feff]/75 backdrop-blur-xs">
      <div className="flex flex-1 flex-col px-2.5 pt-[11px] text-[12px] text-[#222]">
        <p className="leading-[15px] whitespace-nowrap">
          在下方编辑区输入文本, 变量名称或表达式要写在 "[[""]]" 中。例如：插入变量[[OnLoadVariable]]返回值为变量"OnLoadVariable"的<br />
          当前值；插入表达式[[VarA + VarB]]返回值为"VarA + VarB"的和；插入 [[PageName]] 返回值为当前页面名称。
        </p>
        <div className="mt-1 h-7 text-[11px] leading-6"><A>插入变量或函数...</A></div>
        <div className="mt-px flex h-[72px] border border-[#e3e6ec] border-t-[#abadb3] bg-white">
          <textarea aria-label="表达式" className="flex-1 resize-none outline-none" />
          <div className="mr-0.5 flex w-[17px] flex-col items-center justify-between bg-[#f1f1f1] py-[7px]"><UpTri /><DownTri /></div>
        </div>
        <fieldset className="mx-0.5 mt-2.5 border border-[#bbb] px-[7px] pb-1.5">
          <legend className="-ml-px px-[1px] text-[12px] leading-[18px] text-black">局部变量</legend>
          <p className="mt-[5px] leading-4">在下方创建用于插入fx的局部变量，局部变量名称必须是字母、数字, 不允许包含空格。</p>
          <div className="mt-0.5 h-[21px] text-[11px] leading-5"><A>添加局部变量</A></div>
          <div className="mt-[5px] flex h-[108px] items-start border border-[#b5b5b5] bg-white px-[2px] pt-[3px] text-[11px] text-black">
            <input aria-label="变量名称" defaultValue="word" className="h-[22px] w-[203px] border border-[#ccc] pl-[3px] outline-none" />
            <span className="w-5 text-center leading-5">=</span>
            <Select label="变量类型" value="元件文字" className="h-[22px] w-[150px] bg-[#f3f3f3]" textClass="pl-1.5 text-[12px]" />
            <div className="relative ml-[5px]">
              <input aria-label="目标元件" defaultValue="This" className="h-[22px] w-[227px] border border-[#1b9fd9] pl-[2px] outline-none" />
              <TargetMenu />
            </div>
            <button aria-label="展开" className="ml-1.5 flex h-[22px] items-center"><Svg w={9} h={5}><path d="M0 0h9L4.500 5z" fill="#888" /></Svg></button>
            <button aria-label="删除变量" className="ml-[17px] flex h-[22px] items-center"><Svg w={11} h={11}><path d="M1.500 1.500l8 8M9.500 1.500l-8 8" stroke="#ee3124" strokeWidth="3" /></Svg></button>
          </div>
        </fieldset>
      </div>
    </Dialog>
  )
}

function Marks() {
  return (
    <div className="pointer-events-none font-['Noto_Sans'] text-[22px] leading-6 text-[#ff2814]">
      <span className="absolute top-[556px] left-[612px] h-[45px] w-[126px] rounded-xs border-3 border-[#ff2814]" />
      <span className="absolute top-[658px] left-[1023px] h-[27px] w-[101px] rounded-xs border-3 border-[#ff2814]" />
      <Svg w={246} h={96} className="absolute top-[574px] left-[756px]">
        <path d="M2 1L230 79l1-5 13 18-18 2 2-5L1 3z" fill="#ff2814" />
      </Svg>
      <span className="absolute top-[614px] left-[616px]">1</span>
      <span className="absolute top-[663px] left-[1154px]">2</span>
    </div>
  )
}

/* ---------- desktop extras ---------- */

function ImeBar() {
  return (
    <div className="absolute right-0 bottom-2 flex h-[30px] w-[193px] items-center rounded-l border border-[#a9bfd2] bg-white text-[#0a63c0]">
      <Svg w={34} h={30}><path d="M6 5l22-4c2 0 3 1 3 3l2 19c0 2-1 3-3 3L12 30c-3 0-4-1-4-3L5 8z" fill="#f9541c" /><path d="M26 8c-6-2-13-1-12 4 1 4 11 3 11 7 0 5-8 5-12 2" stroke="#fff" strokeWidth="4" /></Svg>
      <span className="ml-2 h-full w-px bg-[#e8dccf]" />
      <div className="flex flex-1 items-center justify-around pl-1">
        <b className="text-[15px]">中</b>
        <Svg w={14} h={14}><circle cx="4" cy="4" r="2" stroke="#0a63c0" strokeWidth="1.500" /><path d="M10 7h3c0 3-1 5-3 6" fill="#0a63c0" /></Svg>
        <Svg w={17} h={17}><circle cx="8.500" cy="8.500" r="7.500" stroke="#0a63c0" strokeWidth="1.500" /><path d="M6 5v3M11 5v3M5 11c2 2 5 2 7 0" stroke="#0a63c0" strokeWidth="1.500" /></Svg>
        <Svg w={15} h={15}><path d="M1 10l8-9 5 4-7 9-5 0z" stroke="#0a63c0" strokeWidth="2" /></Svg>
        <Svg w={12} h={16}><rect x="3" y="0" width="6" height="9" rx="3" fill="#0a63c0" /><path d="M1 6c0 7 10 7 10 0M6 11v5" stroke="#0a63c0" strokeWidth="2" /></Svg>
        <Svg w={15} h={14}><path d="M0 0h6v6H0zM0 8h6v6H0zM9 8h6v6H9z" fill="#0a63c0" /><path d="M9.500.5h5v5h-5z" stroke="#0a63c0" /></Svg>
      </div>
    </div>
  )
}

function Taskbar() {
  return (
    <footer className="flex h-2 shrink-0 overflow-hidden border-t border-[#1d3a55] bg-linear-to-r from-[#6c8cab] via-[#8fbfe6] to-[#7cb2df]">
      <div className="w-[114px] shrink-0"><Svg w={114} h={8}><circle cx="27" cy="15" r="14" fill="#7392ad" stroke="#dce8f2" /><circle cx="78" cy="9" r="7" fill="#c6d800" /><circle cx="91" cy="9" r="6" fill="#4ba3e8" /></Svg></div>
      <div className="w-[148px] shrink-0 bg-[#eef0f2]" />
      <div className="w-[52px] shrink-0 bg-[#1a86f5]" />
      <Svg w={562} h={8}>
        <path d="M20 5h18v3H20z" fill="#d8a75c" />
        <path d="M67.500 0h60v8h-60zM129.500 0h60v8h-60zM191.500 0h60v8h-60zM439.500 0h60v8h-60zM501.500 0h60v8h-60z" fill="#c6def2" stroke="#3d5c78" />
        <circle cx="97" cy="13" r="10" fill="#d8453b" />
        <path d="M143 3h32v5h-32z" fill="#7b1fa2" /><rect x="206" y="3" width="30" height="9" rx="4" fill="#e1001a" />
        <rect x="269" y="3" width="30" height="9" rx="4" fill="#3f9cf5" /><path d="M331 4h30v4h-30z" fill="#fb3b20" />
        <path d="M394 3h16v5h-16z" fill="#eee" /><circle cx="470" cy="13" r="10" fill="#2e90f5" />
      </Svg>
      <div className="flex-1 bg-linear-to-r from-transparent via-transparent to-[#5f8299]" />
      <Svg w={67} h={8}><path d="M1 6v2M6 6h3M11 6v2M17 6h3M22 6h3" stroke="#fff" /><path d="M54 0v8" stroke="#34526b" /></Svg>
    </footer>
  )
}

export default function App() {
  return (
    <div className="relative flex h-screen flex-col overflow-hidden bg-[#d8d8d8] font-['Liberation_Sans','Noto_Sans_CJK_SC',sans-serif] text-[#1a1a1a]">
      <TitleBar />
      <MenuBar />
      <Toolbar />
      <FormatBar />
      <div className="flex min-h-0 flex-1">
        <LeftColumn />
        <Canvas />
        <Inspector />
      </div>
      <Taskbar />
      <CaseEditor />
      <ValueEditor />
      <Marks />
      <div className="absolute top-[819px] -right-[29px] flex h-12 w-12 items-center rounded-full border-2 border-[#f5f5f5] bg-linear-to-b from-[#7fdc85] to-[#37b84a] pl-[3px] text-[12px] font-bold text-white shadow-[0_1px_4px_#555]">51</div>
      <ImeBar />
    </div>
  )
}
